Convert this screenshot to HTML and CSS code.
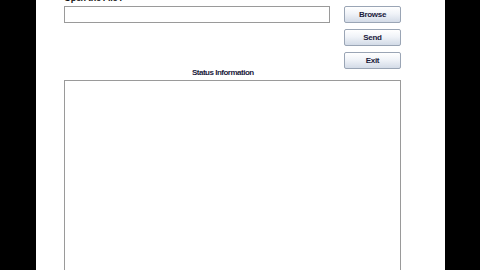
FILE: index.html
```html
<!DOCTYPE html>
<html lang="en">
<head>
    <meta charset="UTF-8">
    <title>File Sender</title>
    <link rel="stylesheet" href="styles.css">
</head>
<body>
    <div class="panel">
        <div class="top-row">
            <div class="file-box">
                <label for="file-path" class="file-label">Open the File :</label>
                <input type="text" id="file-path" class="file-input">
            </div>
            <div class="buttons">
                <button class="btn">Browse</button>
                <button class="btn">Send</button>
                <button class="btn">Exit</button>
            </div>
        </div>
        <div class="status-title">Status Information</div>
        <textarea class="status-area"></textarea>
    </div>
</body>
</html>
```

FILE: styles.css
```css
html, body {
    margin: 0;
    height: 100%;
    background-color: #000;
    overflow: hidden;
}

body {
    font-family: 'Liberation Sans', Arial, sans-serif;
}

.panel {
    width: 381px;
    height: 100%;
    margin-left: 36px;
    padding-left: 28px;
    background-color: #fff;
    box-sizing: content-box;
}

.top-row {
    display: flex;
    gap: 14px;
}

.file-box {
    display: flex;
    flex-direction: column;
    width: 266px;
}

.file-label {
    display: block;
    height: 6px;
    margin-top: -7px;
    margin-bottom: 7px;
    font-size: 9px;
    font-weight: bold;
    letter-spacing: -0.3px;
    line-height: 10px;
    color: #111;
}

.file-input {
    height: 17px;
    margin: 0;
    padding: 0 3px;
    border: 1px solid #9a9a9a;
    box-sizing: border-box;
    background: #fff;
}

.buttons {
    display: flex;
    flex-direction: column;
    gap: 6px;
    padding-top: 6px;
}

.btn {
    width: 57px;
    height: 17px;
    padding: 0;
    border: 1px solid #9aa5b5;
    border-radius: 2px;
    background: linear-gradient(#ffffff, #f0f3f8 45%, #d3dbe7);
    color: #1b1b3c;
    font-family: 'Liberation Sans', Arial, sans-serif;
    font-size: 8px;
    font-weight: bold;
    letter-spacing: -0.3px;
    cursor: pointer;
}

.status-title {
    height: 8px;
    margin-bottom: 3px;
    padding-left: 128px;
    font-size: 8px;
    font-weight: bold;
    letter-spacing: -0.5px;
    line-height: 8px;
    color: #1b1b3c;
}

.status-area {
    display: block;
    width: 337px;
    height: 200px;
    margin: 0;
    border: 1px solid #9a9a9a;
    box-sizing: border-box;
    resize: none;
}
```
